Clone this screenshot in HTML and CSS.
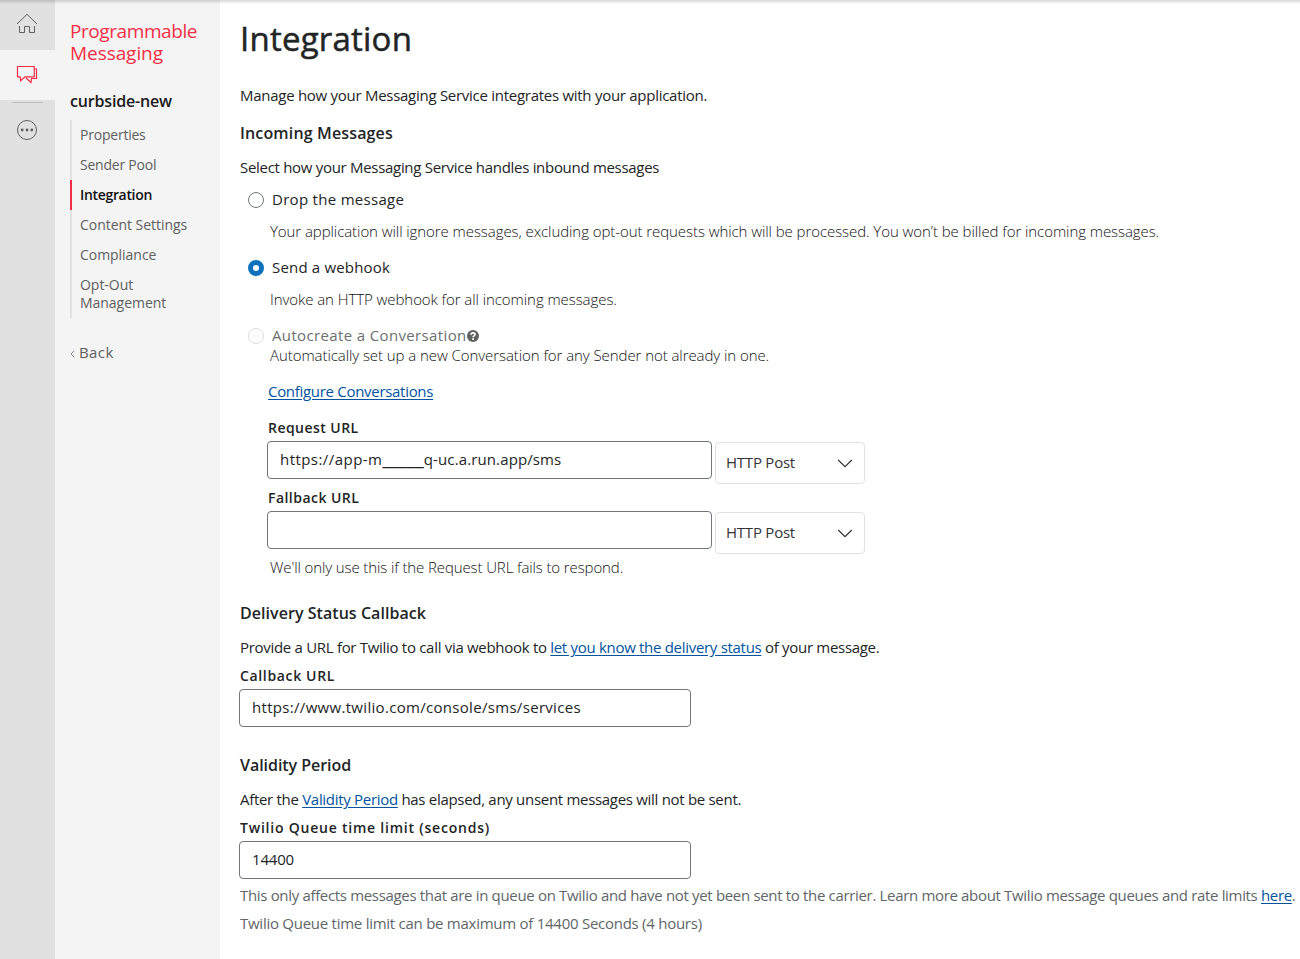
FILE: index.html
```html
<!DOCTYPE html>
<html lang="en">
<head>
<meta charset="utf-8">
<title>Integration</title>
<link rel="stylesheet" href="styles.css">
</head>
<body>
<div class="app">
  <nav class="rail">
    <a class="rail-item"><svg width="22" height="22" viewBox="0 0 22 22" fill="none" stroke="#606060" stroke-width="1"><path d="M1 12 11 2.400 21 12M3.500 14v6.500h5V14.500h5v6h5V14"/></svg></a>
    <a class="rail-item active"><svg width="22" height="22" viewBox="0 0 22 22" fill="none" stroke="#f22f46" stroke-width="1.200"><path d="M1.500 3.500h16.800v10.300H9L4.600 17.800 4.200 13.800H1.500zM18.500 6h2v9.500h-5l-.5 4-5-4.500"/></svg></a>
    <div class="rail-line"></div>
    <a class="rail-item more"><svg width="22" height="22" viewBox="0 0 22 22"><circle cx="11" cy="11" r="9.500" fill="none" stroke="#606060"/><circle cx="6.200" cy="11" r="1.400" fill="#606060"/><circle cx="11" cy="11" r="1.400" fill="#606060"/><circle cx="15.800" cy="11" r="1.400" fill="#606060"/></svg></a>
  </nav>
  <aside class="side">
    <div class="product"><span class="product-first">Programmable</span><br>Messaging</div>
    <div class="service">curbside-new</div>
    <ul class="menu">
      <li>Properties</li>
      <li>Sender Pool</li>
      <li class="current">Integration</li>
      <li class="airy">Content Settings</li>
      <li class="airy">Compliance</li>
      <li class="airy">Opt-Out<br>Management</li>
    </ul>
    <a class="back"><svg width="5" height="8" viewBox="0 0 5 8" fill="none" stroke="#888"><path d="M4.200.7 1 4l3.200 3.300"/></svg>Back</a>
  </aside>
  <main class="main">
    <h1>Integration</h1>
    <p class="intro">Manage how your Messaging Service integrates with your application.</p>

    <h2 class="incoming">Incoming Messages</h2>
    <p class="lead">Select how your Messaging Service handles inbound messages</p>
    <div class="option"><i class="radio"></i>Drop the message</div>
    <p class="note spaced">Your application will ignore messages, excluding opt-out requests which will be processed. You won’t be billed for incoming messages.</p>
    <div class="option next"><i class="radio on"></i><span class="snug">Send a webhook</span></div>
    <p class="note spaced">Invoke an HTTP webhook for all incoming messages.</p>
    <div class="option next disabled"><i class="radio"></i>Autocreate a Conversation<svg class="help" width="12" height="12" viewBox="0 0 12 12"><circle cx="6" cy="6" r="6" fill="#606060"/><path d="M4 4.700C4 2.300 8 2.300 8 4.500 8 5.900 6.100 5.800 6.100 7.200" fill="none" stroke="#fff" stroke-width="1.700"/><rect x="5.200" y="8.200" width="1.800" height="1.700" fill="#fff"/></svg></div>
    <p class="note">Automatically set up a new Conversation for any Sender not already in one.</p>
    <div class="webhook">
      <p class="configure"><a class="link">Configure Conversations</a></p>
      <label>Request URL</label>
      <div class="row">
        <div class="input url app-url">https://app-m<span class="blank">_____</span><span class="host">q-uc.a.run.app/sms</span></div>
        <div class="select">HTTP Post<svg width="16" height="9" viewBox="0 0 16 9" fill="none" stroke="#333" stroke-width="1.200"><path d="M1.200 1 8 7.600 14.800 1"/></svg></div>
      </div>
      <label class="fallback">Fallback URL</label>
      <div class="row">
        <div class="input url"></div>
        <div class="select">HTTP Post<svg width="16" height="9" viewBox="0 0 16 9" fill="none" stroke="#333" stroke-width="1.200"><path d="M1.200 1 8 7.600 14.800 1"/></svg></div>
      </div>
    </div>
    <p class="note fallback-note">We'll only use this if the Request URL fails to respond.</p>

    <h2 class="delivery">Delivery Status Callback</h2>
    <p class="lead">Provide a URL for Twilio to call via webhook to <a class="link">let you know the delivery status</a> of your message.</p>
    <label class="field-label callback">Callback URL</label>
    <div class="input site-url">https://www.twilio.com/console/sms/services</div>

    <h2 class="validity">Validity Period</h2>
    <p class="lead">After the <a class="link">Validity Period</a> has elapsed, any unsent messages will not be sent.</p>
    <label class="field-label limit">Twilio Queue time limit (seconds)</label>
    <div class="input">14400</div>
    <p class="hint queue">This only affects messages that are in queue on Twilio and have not yet been sent to the carrier. Learn more about Twilio message queues and rate limits <a class="link">here</a>.</p>
    <p class="hint">Twilio Queue time limit can be maximum of 14400 Seconds (4 hours)</p>
  </main>
  <div class="top-shadow"></div>
</div>
</body>
</html>
```
FILE: styles.css
```css
* { box-sizing: border-box; }
body {
  margin: 0;
  background: #fff;
  color: #222525;
  font: 15px/20px "Open Sans", "Noto Sans", sans-serif;
  letter-spacing: -0.3px;
}
h1, h2, p, ul { margin: 0; padding: 0; }
p { line-height: 18px; padding-bottom: 2px; }
.app { display: flex; height: 959px; overflow: hidden; position: relative; }
.top-shadow {
  position: absolute; inset: 0 0 auto 0; height: 4px;
  background: linear-gradient(rgba(0,0,0,.16), rgba(0,0,0,0));
}

/* Icon rail */
.rail { width: 55px; flex: none; background: #e1e1e1; }
.rail-item { display: flex; height: 50px; align-items: center; padding: 0 0 4px 16px; }
.rail-item.active { background: #f4f4f4; padding-bottom: 2px; }
.rail-line { width: 31px; height: 1px; margin: 2px 0 0 12px; background: #bdbdbd; }
.rail-item.more { height: 54px; padding-bottom: 0; }

/* Sidebar */
.side { width: 165px; flex: none; background: #f4f4f4; padding: 20px 0 0 15px; }
.product { font-size: 19px; line-height: 22px; color: #f22f46; letter-spacing: -.06px; }
.product-first { letter-spacing: -.42px; }
.service { margin-top: 27px; font-size: 16px; font-weight: 600; line-height: 20px; letter-spacing: -.17px; color: #1a1a1a; }
.menu {
  list-style: none; margin-top: 9px; width: 145px;
  font-size: 14px; line-height: 18px; color: #606060; letter-spacing: -.22px;
}
.menu li { padding: 6px 0 6px 8px; border-left: 2px solid #e1e1e1; }
.menu li.airy { letter-spacing: -.04px; }
.menu li.current { border-color: #f22f46; color: #111; font-weight: 600; letter-spacing: -.33px; }
.back { display: flex; align-items: center; gap: 4px; margin-top: 24px; color: #606060; letter-spacing: .4px; }
.back svg { margin-top: 4px; }

/* Content */
.main { flex: 1; min-width: 0; padding: 19px 0 0 20px; white-space: nowrap; }
h1 { font-weight: 400; font-size: 33px; line-height: 40px; letter-spacing: .22px; -webkit-text-stroke: .5px #222525; }
h2 { font-size: 16px; line-height: 20px; font-weight: 600; letter-spacing: .05px; }
.intro { margin-top: 27px; letter-spacing: -.275px; }
.incoming { margin-top: 17px; letter-spacing: .15px; }
.lead { margin-top: 15px; }
.option {
  display: flex; align-items: center; height: 20px; margin: 12px 0 0 8px;
  padding-bottom: 2px; line-height: 18px; letter-spacing: .3px;
}
.option.next { margin-top: 16px; }
.snug { letter-spacing: .18px; }
.option.disabled { color: #6b7070; letter-spacing: .36px; }
.radio { width: 16px; height: 16px; margin-right: 8px; align-self: flex-end; border: 1px solid #727679; border-radius: 50%; }
.radio.on { border: 5px solid #0e71bd; }
.disabled .radio { border-color: #ddd; }
.help { margin-top: 2px; }
.note { margin-left: 30px; font-weight: 300; color: #111; letter-spacing: -.07px; }
.note.spaced { margin-top: 12px; }
.link { color: #00549f; text-decoration: underline; text-underline-offset: 2px; }
.webhook { margin: 16px 0 0 28px; }
label { display: block; margin-top: 16px; font-size: 14px; font-weight: 600; letter-spacing: .46px; }
label.fallback { margin-top: 4px; }
.row { display: flex; gap: 3px; margin-left: -1px; }
.input {
  width: 452px; height: 38px; margin: 3px 0 0 -1px; padding: 0 12px 0;
  border: 1px solid #727679; border-radius: 4px; line-height: 34px; letter-spacing: -.18px;
}
.input.url { width: 445px; margin-left: 0; }
.input.app-url { letter-spacing: .45px; }
.blank { font-size: 19px; line-height: 0; letter-spacing: -.05px; }
.host { letter-spacing: .12px; }
.input.site-url { letter-spacing: .31px; }
.select {
  display: flex; align-items: center; justify-content: space-between;
  width: 150px; height: 42px; margin-top: 4px; padding: 0 11px 3px 10px;
  border: 1px solid #e1e1e1; border-radius: 4px; color: #333; letter-spacing: -.23px;
}
.row .input { margin-bottom: 5px; }
.select svg { margin-top: 4px; }
.fallback-note { margin-top: 4px; letter-spacing: -.11px; }
.delivery { margin-top: 25px; }
.field-label { margin-top: 8px; }
.callback { letter-spacing: .65px; }
.validity { margin-top: 28px; letter-spacing: -.05px; }
.limit { letter-spacing: .78px; }
.hint { margin-top: 8px; color: #606668; letter-spacing: -.26px; }
.hint.queue { margin-top: 7px; letter-spacing: -.33px; }
```
